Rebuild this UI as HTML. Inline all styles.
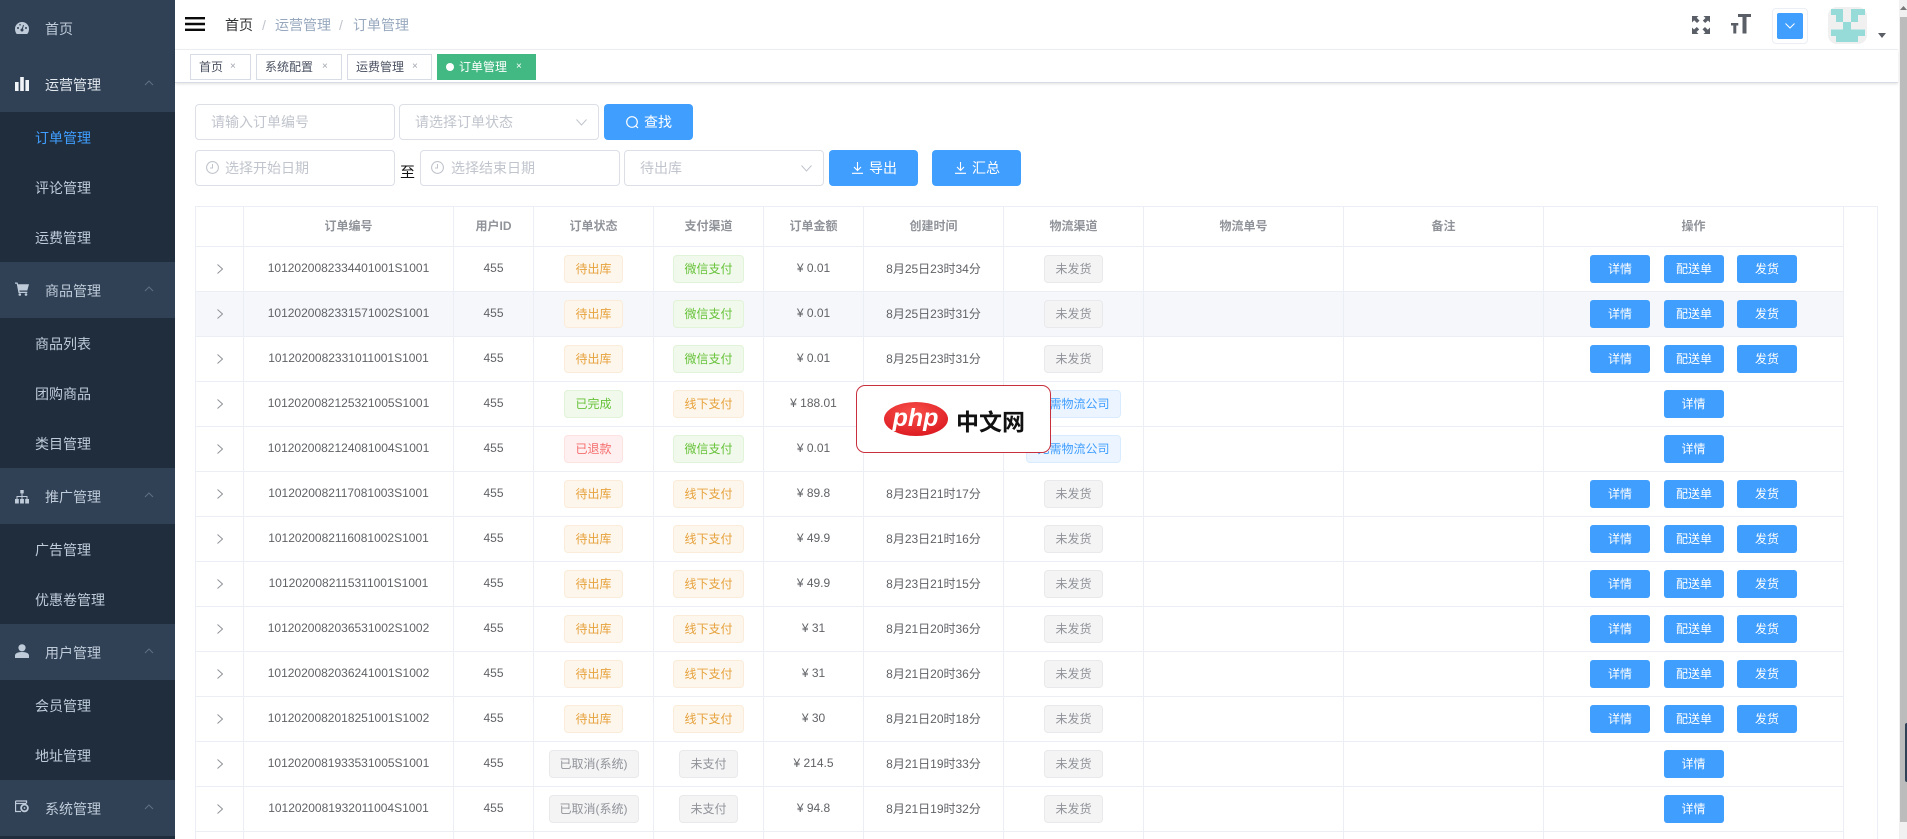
<!DOCTYPE html>
<html lang="zh"><head><meta charset="utf-8"><title>订单管理</title>
<style>
*{box-sizing:border-box}
html,body{margin:0;padding:0;width:1907px;height:839px;overflow:hidden;background:#fff}
body{font-family:"Liberation Sans","Noto Sans CJK SC",sans-serif;font-size:14px;color:#606266;position:relative}
.a{position:absolute}
#side{left:0;top:0;width:175px;height:839px;background:#1f2d3d;overflow:hidden}
.g{position:absolute;left:0;width:175px;height:56px;background:#304156;color:#bfcbd9;line-height:56px}
.g span{position:absolute;left:45px;top:1px}
.g svg.ic{position:absolute;left:15px;top:20px}
.g svg.ch{position:absolute;left:144px;top:24px}
.s{position:absolute;left:35px;color:#bfcbd9;line-height:50px;height:50px;margin-top:1px}
#hd{left:175px;top:0;width:1723px;height:50px;border-bottom:1px solid #f0f2f5;background:#fff}
#tb{left:175px;top:50px;width:1723px;height:33px;border-bottom:1px solid #d8dce5;box-shadow:0 1px 3px rgba(0,0,0,.12);background:#fff}
.tag-n{position:absolute;top:54px;height:26px;border:1px solid #d8dce5;background:#fff;font-size:12px;line-height:24px;color:#495060;padding-left:8px;white-space:nowrap}
.tag-n i{position:absolute;font-style:normal;font-size:10px;color:#a0a5ae;top:0}
.ip{position:absolute;border:1px solid #dcdfe6;border-radius:4px;height:36px;background:#fff;color:#c0c4cc;line-height:34px;padding-left:15px}
.bt{position:absolute;height:36px;background:#409eff;border-radius:4px;color:#fff;line-height:36px}
.bt span{position:absolute;top:0}
#wrap{left:195px;top:206px;width:1683px;height:633px;border:1px solid #ebeef5;border-bottom:0;overflow:hidden;background:#fff}
table{border-collapse:separate;border-spacing:0;table-layout:fixed;width:1648px}
td,th{padding:0 0 2px;border-right:1px solid #ebeef5;border-bottom:1px solid #ebeef5;font-size:12px;font-weight:normal;text-align:center;vertical-align:middle;height:45px;white-space:nowrap}
th{height:40px;font-weight:bold;color:#909399}
td svg{position:relative;top:2px}
.hv td{background:#f5f7fa}
.t{display:inline-block;height:28px;line-height:26px;padding:0 10px;border:1px solid;border-radius:4px;vertical-align:middle;position:relative;top:1px}
.w{background:#fdf6ec;border-color:#faecd8;color:#e6a23c}
.o{background:#f0f9eb;border-color:#e1f3d8;color:#67c23a}
.d{background:#fef0f0;border-color:#fde2e2;color:#f56c6c}
.n{background:#f4f4f5;border-color:#e9e9eb;color:#909399}
.b{background:#ecf5ff;border-color:#d9ecff;color:#409eff}
.k{display:inline-block;width:60px;height:28px;line-height:28px;background:#409eff;color:#fff;border-radius:3px;vertical-align:middle;position:relative;top:1px}
.m1{margin-left:14px}.m2{margin-left:13px}
</style></head><body>

<div class="a" id="side">
<div class="g" style="top:0"><svg class="ic" style="top:21px" width="14" height="14" viewBox="0 0 14 14"><path d="M7 1a7 7 0 0 0-7 7c0 1.800.6 3.500 1.700 5h10.600A7.600 7.600 0 0 0 14 8a7 7 0 0 0-7-7z" fill="#bfcbd9"/><circle cx="7" cy="9" r="1.500" fill="#304156"/><path d="M7 9l1.500-5" stroke="#304156" stroke-width="1"/><circle cx="3" cy="7" r="1" fill="#304156"/><circle cx="11" cy="7" r="1" fill="#304156"/><circle cx="5" cy="3.800" r=".8" fill="#304156"/></svg><span>首页</span></div>
<div class="g" style="top:56px;color:#e4e9ef"><svg class="ic" style="top:21px" width="14" height="14" viewBox="0 0 14 14"><rect x="0" y="5" width="3.600" height="9" fill="#f2f5f8"/><rect x="5.200" y="0" width="3.600" height="14" fill="#f2f5f8"/><rect x="10.400" y="3" width="3.600" height="11" fill="#f2f5f8"/></svg><span>运营管理</span><svg class="ch" width="10" height="6" viewBox="0 0 10 6"><path d="M1 5l4-4 4 4" fill="none" stroke="#5f6f82" stroke-width="1"/></svg></div>
<div class="s" style="top:112px;color:#409eff">订单管理</div>
<div class="s" style="top:162px">评论管理</div>
<div class="s" style="top:212px">运费管理</div>

<div class="g" style="top:262px"><svg class="ic" style="top:20px" width="14" height="14" viewBox="0 0 14 14"><path d="M0 .5h2.500l.6 1.700H14l-1.700 6.300H4.400l.3 1.300h7.600v1.200H3.500L1.700 1.700H0z" fill="#bfcbd9"/><circle cx="4.800" cy="12.500" r="1.300" fill="#bfcbd9"/><circle cx="11" cy="12.500" r="1.300" fill="#bfcbd9"/></svg><span>商品管理</span><svg class="ch" width="10" height="6" viewBox="0 0 10 6"><path d="M1 5l4-4 4 4" fill="none" stroke="#5f6f82" stroke-width="1"/></svg></div>
<div class="s" style="top:318px">商品列表</div>
<div class="s" style="top:368px">团购商品</div>
<div class="s" style="top:418px">类目管理</div>

<div class="g" style="top:468px"><svg class="ic" style="top:22px" width="14" height="14" viewBox="0 0 14 14"><rect x="5.300" y="0" width="3.400" height="3.400" fill="#bfcbd9"/><path d="M7 3.400v3M2 9V6.500h10V9M7 6.500V9" fill="none" stroke="#bfcbd9"/><rect x="0" y="9" width="3.800" height="4.500" fill="#bfcbd9"/><rect x="5.100" y="9" width="3.800" height="4.500" fill="#bfcbd9"/><rect x="10.200" y="9" width="3.800" height="4.500" fill="#bfcbd9"/></svg><span>推广管理</span><svg class="ch" width="10" height="6" viewBox="0 0 10 6"><path d="M1 5l4-4 4 4" fill="none" stroke="#5f6f82" stroke-width="1"/></svg></div>
<div class="s" style="top:524px">广告管理</div>
<div class="s" style="top:574px">优惠卷管理</div>

<div class="g" style="top:624px"><svg class="ic" style="top:20px" width="14" height="14" viewBox="0 0 14 14"><circle cx="7" cy="3.800" r="3.600" fill="#bfcbd9"/><path d="M0 14v-2.500C0 9.500 2.500 8 7 8s7 1.500 7 3.500V14z" fill="#bfcbd9"/></svg><span>用户管理</span><svg class="ch" width="10" height="6" viewBox="0 0 10 6"><path d="M1 5l4-4 4 4" fill="none" stroke="#5f6f82" stroke-width="1"/></svg></div>
<div class="s" style="top:680px">会员管理</div>
<div class="s" style="top:730px">地址管理</div>

<div class="g" style="top:780px"><svg class="ic" style="top:20px" width="14" height="14" viewBox="0 0 14 14"><path d="M.5 1h11v2M.5 1v10.500H6M.5 3.500h11" fill="none" stroke="#bfcbd9" stroke-width="1.300"/><circle cx="9.500" cy="8" r="3.400" fill="none" stroke="#bfcbd9" stroke-width="1.800"/><circle cx="9.500" cy="8" r=".9" fill="#bfcbd9"/></svg><span>系统管理</span><svg class="ch" width="10" height="6" viewBox="0 0 10 6"><path d="M1 5l4-4 4 4" fill="none" stroke="#5f6f82" stroke-width="1"/></svg></div>
</div>

<div class="a" id="hd"></div>
<svg class="a" style="left:185px;top:17px" width="20" height="14" viewBox="0 0 20 14"><path d="M0 1.200h20M0 7h20M0 12.800h20" stroke="#0a0a0a" stroke-width="2.400"/></svg>
<div class="a" style="left:225px;top:15px;line-height:20px;color:#303133;white-space:nowrap">首页</div>
<div class="a" style="left:262px;top:15px;line-height:20px;color:#c0c4cc">/</div>
<div class="a" style="left:275px;top:15px;line-height:20px;color:#97a8be;white-space:nowrap">运营管理</div>
<div class="a" style="left:339px;top:15px;line-height:20px;color:#c0c4cc">/</div>
<div class="a" style="left:353px;top:15px;line-height:20px;color:#97a8be;white-space:nowrap">订单管理</div>

<!-- top-right icons -->
<svg class="a" style="left:1692px;top:16px" width="18" height="18" viewBox="0 0 18 18" fill="#5a5e66"><path d="M0 0h6.500L4.700 1.800 7.500 4.600 5 7 2.200 4.300 0 6.500zM18 0v6.500l-2-2L13.200 7l-2.400-2.400L13.500 2 11.500 0zM0 18v-6.500l2 2L4.800 11l2.400 2.400L4.500 16l2 2zM18 18h-6.500l1.800-1.800L10.500 13.400 13 11l2.800 2.700 2.200-2.200z"/></svg>
<svg class="a" style="left:1731px;top:14px" width="20" height="20" viewBox="0 0 20 20" fill="#5a5e66"><path d="M7 0h13v3h-4.500v16.500h-4V3H7zM0 9h7.300v2.500H5.300v8h-3v-8H0z"/></svg>
<div class="a" style="left:1772px;top:8px;width:36px;height:36px;border:1px solid #ebeef5;border-radius:4px;background:#fff"></div>
<div class="a" style="left:1777px;top:13px;width:26px;height:26px;background:#409eff;border-radius:2px"></div>
<svg class="a" style="left:1785px;top:23px" width="10" height="6" viewBox="0 0 10 6"><path d="M.5 .5L5 5l4.500-4.500" fill="none" stroke="#fff"/></svg>
<svg class="a" style="left:1828px;top:7px" width="39" height="37" viewBox="0 0 39 37"><rect width="39" height="37" rx="9" fill="#f0f0f0"/><g fill="#96dbd8"><rect x="3" y="2" width="12" height="6"/><rect x="8" y="8" width="7" height="7"/><rect x="15" y="15" width="8" height="7.500"/><rect x="23" y="2" width="14" height="6"/><rect x="23" y="8" width="7" height="7"/><rect x="3" y="22.500" width="34" height="6.500"/><rect x="8" y="29" width="22" height="6"/></g></svg>
<svg class="a" style="left:1878px;top:33px" width="8" height="5" viewBox="0 0 8 5"><path d="M0 0h8L4 5z" fill="#5a5e66"/></svg>

<div class="a" id="tb"></div>
<div class="tag-n" style="left:190px;width:61px">首页<i style="left:39px">×</i></div>
<div class="tag-n" style="left:256px;width:86px">系统配置<i style="left:65px">×</i></div>
<div class="tag-n" style="left:347px;width:85px">运费管理<i style="left:64px">×</i></div>
<div class="tag-n" style="left:437px;width:99px;background:#42b983;border-color:#42b983;color:#fff;padding-left:21px">订单管理<i style="left:78px;color:#fff">×</i><b style="position:absolute;left:8px;top:8px;width:8px;height:8px;border-radius:50%;background:#fff"></b></div>

<!-- filters -->
<div class="ip" style="left:195px;top:104px;width:200px">请输入订单编号</div>
<div class="ip" style="left:399px;top:104px;width:200px;padding-left:15px">请选择订单状态</div>
<svg class="a" style="left:576px;top:119px" width="11" height="7" viewBox="0 0 11 7"><path d="M.5 .5L5.500 6l5-5.500" fill="none" stroke="#c0c4cc"/></svg>
<div class="bt" style="left:604px;top:104px;width:89px"><svg class="a" style="left:22px;top:12px" width="13" height="13" viewBox="0 0 13 13"><circle cx="6" cy="6" r="5.300" fill="none" stroke="#fff" stroke-width="1.200"/><path d="M10 10l2 2" stroke="#fff" stroke-width="1.200"/></svg><span style="left:40px">查找</span></div>

<div class="ip" style="left:195px;top:150px;width:200px;padding-left:29px">选择开始日期</div>
<svg class="a" style="left:206px;top:161px" width="13" height="13" viewBox="0 0 13 13"><circle cx="6.500" cy="6.500" r="5.900" fill="none" stroke="#c0c4cc" stroke-width="1.100"/><path d="M6.500 3V7H4" fill="none" stroke="#c0c4cc"/></svg>
<div class="a" style="left:400px;top:164px;font-size:15px;line-height:18px;color:#111">至</div>
<div class="ip" style="left:420px;top:150px;width:200px;padding-left:30px">选择结束日期</div>
<svg class="a" style="left:431px;top:161px" width="13" height="13" viewBox="0 0 13 13"><circle cx="6.500" cy="6.500" r="5.900" fill="none" stroke="#c0c4cc" stroke-width="1.100"/><path d="M6.500 3V7H4" fill="none" stroke="#c0c4cc"/></svg>
<div class="ip" style="left:624px;top:150px;width:200px">待出库</div>
<svg class="a" style="left:801px;top:165px" width="11" height="7" viewBox="0 0 11 7"><path d="M.5 .5L5.500 6l5-5.500" fill="none" stroke="#c0c4cc"/></svg>
<div class="bt" style="left:829px;top:150px;width:89px"><svg class="a" style="left:23px;top:12px" width="11" height="12" viewBox="0 0 11 12"><path d="M5.500 0v8M2 5l3.500 3.500L9 5M0 11.300h11" fill="none" stroke="#fff" stroke-width="1.100"/></svg><span style="left:40px">导出</span></div>
<div class="bt" style="left:932px;top:150px;width:89px"><svg class="a" style="left:23px;top:12px" width="11" height="12" viewBox="0 0 11 12"><path d="M5.500 0v8M2 5l3.500 3.500L9 5M0 11.300h11" fill="none" stroke="#fff" stroke-width="1.100"/></svg><span style="left:40px">汇总</span></div>

<!-- table -->
<div class="a" id="wrap">
<table>
<colgroup><col style="width:48px"><col style="width:210px"><col style="width:80px"><col style="width:120px"><col style="width:110px"><col style="width:100px"><col style="width:140px"><col style="width:140px"><col style="width:200px"><col style="width:200px"><col style="width:300px"></colgroup>
<tr><th></th><th>订单编号</th><th>用户ID</th><th>订单状态</th><th>支付渠道</th><th>订单金额</th><th>创建时间</th><th>物流渠道</th><th>物流单号</th><th>备注</th><th>操作</th></tr>

<tr><td><svg width="6" height="10" viewBox="0 0 6 10"><path d="M.5 .5L5.500 5 .5 9.500" fill="none" stroke="#909399"/></svg></td><td>1012020082334401001S1001</td><td>455</td><td><span class="t w">待出库</span></td><td><span class="t o">微信支付</span></td><td>¥ 0.01</td><td>8月25日23时34分</td><td><span class="t n">未发货</span></td><td></td><td></td><td><span class="k">详情</span><span class="k m1">配送单</span><span class="k m2">发货</span></td></tr>

<tr class="hv"><td><svg width="6" height="10" viewBox="0 0 6 10"><path d="M.5 .5L5.500 5 .5 9.500" fill="none" stroke="#909399"/></svg></td><td>1012020082331571002S1001</td><td>455</td><td><span class="t w">待出库</span></td><td><span class="t o">微信支付</span></td><td>¥ 0.01</td><td>8月25日23时31分</td><td><span class="t n">未发货</span></td><td></td><td></td><td><span class="k">详情</span><span class="k m1">配送单</span><span class="k m2">发货</span></td></tr>

<tr><td><svg width="6" height="10" viewBox="0 0 6 10"><path d="M.5 .5L5.500 5 .5 9.500" fill="none" stroke="#909399"/></svg></td><td>1012020082331011001S1001</td><td>455</td><td><span class="t w">待出库</span></td><td><span class="t o">微信支付</span></td><td>¥ 0.01</td><td>8月25日23时31分</td><td><span class="t n">未发货</span></td><td></td><td></td><td><span class="k">详情</span><span class="k m1">配送单</span><span class="k m2">发货</span></td></tr>

<tr><td><svg width="6" height="10" viewBox="0 0 6 10"><path d="M.5 .5L5.500 5 .5 9.500" fill="none" stroke="#909399"/></svg></td><td>1012020082125321005S1001</td><td>455</td><td><span class="t o">已完成</span></td><td><span class="t w">线下支付</span></td><td>¥ 188.01</td><td></td><td><span class="t b">无需物流公司</span></td><td></td><td></td><td><span class="k">详情</span></td></tr>

<tr><td><svg width="6" height="10" viewBox="0 0 6 10"><path d="M.5 .5L5.500 5 .5 9.500" fill="none" stroke="#909399"/></svg></td><td>1012020082124081004S1001</td><td>455</td><td><span class="t d">已退款</span></td><td><span class="t o">微信支付</span></td><td>¥ 0.01</td><td></td><td><span class="t b">无需物流公司</span></td><td></td><td></td><td><span class="k">详情</span></td></tr>

<tr><td><svg width="6" height="10" viewBox="0 0 6 10"><path d="M.5 .5L5.500 5 .5 9.500" fill="none" stroke="#909399"/></svg></td><td>1012020082117081003S1001</td><td>455</td><td><span class="t w">待出库</span></td><td><span class="t w">线下支付</span></td><td>¥ 89.8</td><td>8月23日21时17分</td><td><span class="t n">未发货</span></td><td></td><td></td><td><span class="k">详情</span><span class="k m1">配送单</span><span class="k m2">发货</span></td></tr>

<tr><td><svg width="6" height="10" viewBox="0 0 6 10"><path d="M.5 .5L5.500 5 .5 9.500" fill="none" stroke="#909399"/></svg></td><td>1012020082116081002S1001</td><td>455</td><td><span class="t w">待出库</span></td><td><span class="t w">线下支付</span></td><td>¥ 49.9</td><td>8月23日21时16分</td><td><span class="t n">未发货</span></td><td></td><td></td><td><span class="k">详情</span><span class="k m1">配送单</span><span class="k m2">发货</span></td></tr>

<tr><td><svg width="6" height="10" viewBox="0 0 6 10"><path d="M.5 .5L5.500 5 .5 9.500" fill="none" stroke="#909399"/></svg></td><td>1012020082115311001S1001</td><td>455</td><td><span class="t w">待出库</span></td><td><span class="t w">线下支付</span></td><td>¥ 49.9</td><td>8月23日21时15分</td><td><span class="t n">未发货</span></td><td></td><td></td><td><span class="k">详情</span><span class="k m1">配送单</span><span class="k m2">发货</span></td></tr>

<tr><td><svg width="6" height="10" viewBox="0 0 6 10"><path d="M.5 .5L5.500 5 .5 9.500" fill="none" stroke="#909399"/></svg></td><td>1012020082036531002S1002</td><td>455</td><td><span class="t w">待出库</span></td><td><span class="t w">线下支付</span></td><td>¥ 31</td><td>8月21日20时36分</td><td><span class="t n">未发货</span></td><td></td><td></td><td><span class="k">详情</span><span class="k m1">配送单</span><span class="k m2">发货</span></td></tr>

<tr><td><svg width="6" height="10" viewBox="0 0 6 10"><path d="M.5 .5L5.500 5 .5 9.500" fill="none" stroke="#909399"/></svg></td><td>1012020082036241001S1002</td><td>455</td><td><span class="t w">待出库</span></td><td><span class="t w">线下支付</span></td><td>¥ 31</td><td>8月21日20时36分</td><td><span class="t n">未发货</span></td><td></td><td></td><td><span class="k">详情</span><span class="k m1">配送单</span><span class="k m2">发货</span></td></tr>

<tr><td><svg width="6" height="10" viewBox="0 0 6 10"><path d="M.5 .5L5.500 5 .5 9.500" fill="none" stroke="#909399"/></svg></td><td>1012020082018251001S1002</td><td>455</td><td><span class="t w">待出库</span></td><td><span class="t w">线下支付</span></td><td>¥ 30</td><td>8月21日20时18分</td><td><span class="t n">未发货</span></td><td></td><td></td><td><span class="k">详情</span><span class="k m1">配送单</span><span class="k m2">发货</span></td></tr>

<tr><td><svg width="6" height="10" viewBox="0 0 6 10"><path d="M.5 .5L5.500 5 .5 9.500" fill="none" stroke="#909399"/></svg></td><td>1012020081933531005S1001</td><td>455</td><td><span class="t n">已取消(系统)</span></td><td><span class="t n">未支付</span></td><td>¥ 214.5</td><td>8月21日19时33分</td><td><span class="t n">未发货</span></td><td></td><td></td><td><span class="k">详情</span></td></tr>

<tr><td><svg width="6" height="10" viewBox="0 0 6 10"><path d="M.5 .5L5.500 5 .5 9.500" fill="none" stroke="#909399"/></svg></td><td>1012020081932011004S1001</td><td>455</td><td><span class="t n">已取消(系统)</span></td><td><span class="t n">未支付</span></td><td>¥ 94.8</td><td>8月21日19时32分</td><td><span class="t n">未发货</span></td><td></td><td></td><td><span class="k">详情</span></td></tr>

<tr><td></td><td></td><td></td><td></td><td></td><td></td><td></td><td></td><td></td><td></td><td></td></tr>
</table>
</div>

<!-- watermark -->
<div class="a" style="left:856px;top:385px;width:195px;height:68px;background:#fff;border:1px solid #c9303e;border-radius:9px"></div>
<svg class="a" style="left:884px;top:402px" width="64" height="34" viewBox="0 0 64 34"><defs><radialGradient id="r" cx=".45" cy=".3" r=".8"><stop offset="0" stop-color="#f8504a"/><stop offset="1" stop-color="#d9141c"/></radialGradient></defs><ellipse cx="32" cy="17" rx="32" ry="17" fill="url(#r)"/><text x="31.500" y="24" font-family="Liberation Sans,sans-serif" font-size="25" font-weight="bold" font-style="italic" fill="#fff" text-anchor="middle">php</text></svg>
<div class="a" style="left:956px;top:408px;font-size:23px;line-height:28px;font-weight:bold;color:#111;white-space:nowrap">中文网</div>

<!-- scrollbar -->
<div class="a" style="left:1899px;top:0;width:8px;height:839px;background:#f1f1f1"></div>
<div class="a" style="left:1900px;top:17px;width:7px;height:805px;background:#bcbcbc"></div>
<svg class="a" style="left:1900px;top:5px" width="7" height="6" viewBox="0 0 7 6"><path d="M3.500 1L7 5H0z" fill="#777"/></svg>
<div class="a" style="left:1905px;top:723px;width:2px;height:59px;background:#304156;border-radius:3px 0 0 3px"></div>
</body></html>
